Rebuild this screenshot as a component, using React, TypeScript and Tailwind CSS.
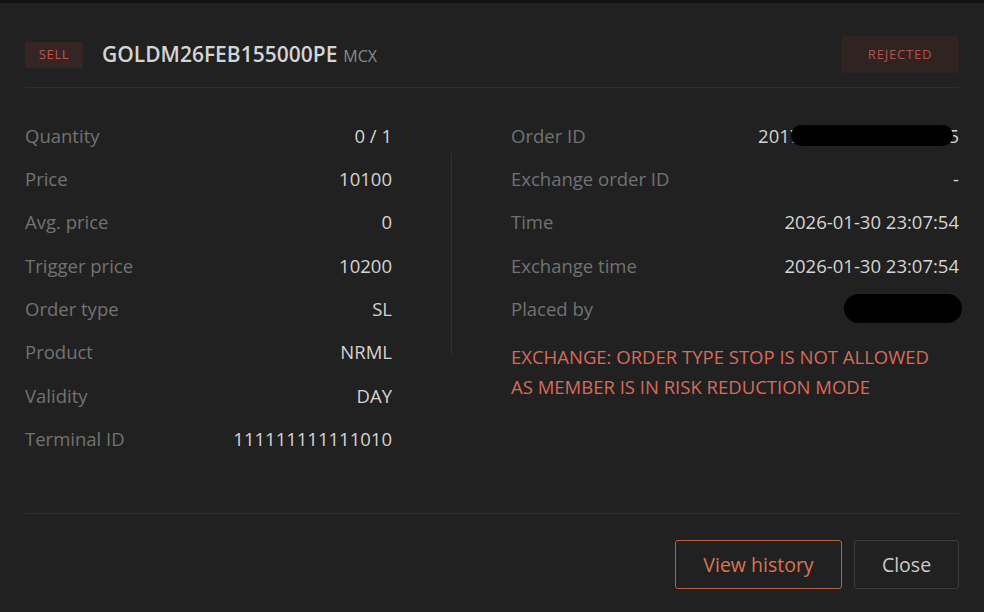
const left = [
  ["Quantity", "0 / 1"],
  ["Price", "10100"],
  ["Avg. price", "0"],
  ["Trigger price", "10200"],
  ["Order type", "SL"],
  ["Product", "NRML"],
  ["Validity", "DAY"],
  ["Terminal ID", "111111111111010"],
];

function Row({ label, children }: { label: string; children: React.ReactNode }) {
  return (
    <div className="h-[43.33px] flex items-center justify-between">
      <span className="text-[#727272]">{label}</span>
      <span className="text-[#d4d4d4] flex items-center">{children}</span>
    </div>
  );
}

export default function App() {
  return (
    <div
      className="w-[984px] h-[612px] bg-[#212121] border-t-[3px] border-[#141414] overflow-hidden text-[18.5px]"
      style={{ fontFamily: '"Open Sans", sans-serif' }}
    >
      <div className="px-[25px]">
        {/* Header */}
        <div className="pt-[33px] pb-[14px] flex items-center justify-between border-b border-[#2e2e2e]">
          <div className="flex items-center">
            <span className="w-[58px] h-[26px] flex items-center justify-center rounded-[2px] bg-[#352524] text-[#c4514f] text-[13px] tracking-[0.6px]">
              SELL
            </span>
            <span className="ml-[19px] text-[21px] font-semibold text-[#d4d4d4]">GOLDM26FEB155000PE</span>
            <span className="ml-[6px] text-[16px] text-[#8a8a8a] mt-[2px]">MCX</span>
          </div>
          <span className="w-[118px] h-[37px] flex items-center justify-center rounded-[3px] bg-[#302423] text-[#b5504d] text-[13px] tracking-[0.8px]">
            REJECTED
          </span>
        </div>

        {/* Details */}
        <div className="h-[426px] pt-[26px] flex border-b border-[#2e2e2e]">
          <div className="w-[367px]">
            {left.map(([l, v]) => (
              <Row key={l} label={l}>
                {v}
              </Row>
            ))}
          </div>
          <div className="w-px h-[202px] mt-[39px] ml-[59px] bg-[#323232]" />
          <div className="w-[448px] ml-[59px]">
            <Row label="Order ID">
              <span>2017</span>
              <span className="inline-block w-[162px] h-[21px] bg-black rounded-full -ml-[9px] relative z-10" />
              <span className="-ml-[5px]">5</span>
            </Row>
            <Row label="Exchange order ID">-</Row>
            <Row label="Time">2026-01-30 23:07:54</Row>
            <Row label="Exchange time">2026-01-30 23:07:54</Row>
            <Row label="Placed by">
              <span className="inline-block w-[118px] h-[29px] bg-black rounded-full -mr-[3px]" />
            </Row>
            <p className="mt-[11px] max-w-[430px] leading-[30px] text-[#da6a5c]">
              EXCHANGE: ORDER TYPE STOP IS NOT ALLOWED AS MEMBER IS IN RISK REDUCTION MODE
            </p>
          </div>
        </div>

        {/* Footer */}
        <div className="pt-[26px] flex justify-end gap-[12px] text-[19.5px]">
          <button className="w-[167px] h-[49px] rounded-[3px] border border-[#b9603f] text-[#df7250]">
            View history
          </button>
          <button className="w-[105px] h-[49px] rounded-[3px] border border-[#3d3d3d] text-[#cacaca]">
            Close
          </button>
        </div>
      </div>
    </div>
  );
}
